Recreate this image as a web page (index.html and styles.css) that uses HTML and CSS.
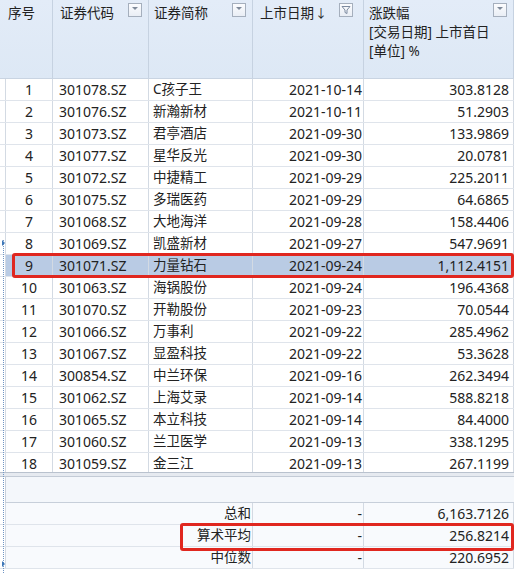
FILE: index.html
```html
<!DOCTYPE html>
<html lang="zh">
<head>
<meta charset="utf-8">
<link rel="stylesheet" href="styles.css">
</head>
<body>
<div class="sheet">
  <div class="head">
    <div class="hc"><span class="zh">序号</span></div>
    <div class="hc"><span class="zh">证券代码</span><i class="dd"></i></div>
    <div class="hc"><span class="zh">证券简称</span><i class="dd"></i></div>
    <div class="hc"><span class="zh">上市日期<b class="arr">↓</b></span><i class="dd flt"><svg width="10" height="10" viewBox="0 0 10 10"><path d="M1 1.5H9L6 5V8.5L4 7.5V5Z" fill="none" stroke="#7d8ba0" stroke-width="1"/></svg></i></div>
    <div class="hc"><span class="zh">涨跌幅<br>[交易日期] 上市首日<br>[单位] %</span><i class="dd"></i></div>
  </div>
  <div class="body">
    <div class="row"><div class="g"></div><div class="c n">1</div><div class="c">301078.SZ</div><div class="c zh">C孩子王</div><div class="c r">2021-10-14</div><div class="c r v">303.8128</div></div>
    <div class="row"><div class="g"></div><div class="c n">2</div><div class="c">301076.SZ</div><div class="c zh">新瀚新材</div><div class="c r">2021-10-11</div><div class="c r v">51.2903</div></div>
    <div class="row"><div class="g"></div><div class="c n">3</div><div class="c">301073.SZ</div><div class="c zh">君亭酒店</div><div class="c r">2021-09-30</div><div class="c r v">133.9869</div></div>
    <div class="row"><div class="g"></div><div class="c n">4</div><div class="c">301077.SZ</div><div class="c zh">星华反光</div><div class="c r">2021-09-30</div><div class="c r v">20.0781</div></div>
    <div class="row"><div class="g"></div><div class="c n">5</div><div class="c">301072.SZ</div><div class="c zh">中捷精工</div><div class="c r">2021-09-29</div><div class="c r v">225.2011</div></div>
    <div class="row"><div class="g"></div><div class="c n">6</div><div class="c">301075.SZ</div><div class="c zh">多瑞医药</div><div class="c r">2021-09-29</div><div class="c r v">64.6865</div></div>
    <div class="row"><div class="g"></div><div class="c n">7</div><div class="c">301068.SZ</div><div class="c zh">大地海洋</div><div class="c r">2021-09-28</div><div class="c r v">158.4406</div></div>
    <div class="row"><div class="g"></div><div class="c n">8</div><div class="c">301069.SZ</div><div class="c zh">凯盛新材</div><div class="c r">2021-09-27</div><div class="c r v">547.9691</div></div>
    <div class="row sel"><div class="g"></div><div class="c n">9</div><div class="c">301071.SZ</div><div class="c zh">力量钻石</div><div class="c r">2021-09-24</div><div class="c r v">1,112.4151</div></div>
    <div class="row"><div class="g"></div><div class="c n">10</div><div class="c">301063.SZ</div><div class="c zh">海锅股份</div><div class="c r">2021-09-24</div><div class="c r v">196.4368</div></div>
    <div class="row"><div class="g"></div><div class="c n">11</div><div class="c">301070.SZ</div><div class="c zh">开勒股份</div><div class="c r">2021-09-23</div><div class="c r v">70.0544</div></div>
    <div class="row"><div class="g"></div><div class="c n">12</div><div class="c">301066.SZ</div><div class="c zh">万事利</div><div class="c r">2021-09-22</div><div class="c r v">285.4962</div></div>
    <div class="row"><div class="g"></div><div class="c n">13</div><div class="c">301067.SZ</div><div class="c zh">显盈科技</div><div class="c r">2021-09-22</div><div class="c r v">53.3628</div></div>
    <div class="row"><div class="g"></div><div class="c n">14</div><div class="c">300854.SZ</div><div class="c zh">中兰环保</div><div class="c r">2021-09-16</div><div class="c r v">262.3494</div></div>
    <div class="row"><div class="g"></div><div class="c n">15</div><div class="c">301062.SZ</div><div class="c zh">上海艾录</div><div class="c r">2021-09-14</div><div class="c r v">588.8218</div></div>
    <div class="row"><div class="g"></div><div class="c n">16</div><div class="c">301065.SZ</div><div class="c zh">本立科技</div><div class="c r">2021-09-14</div><div class="c r v">84.4000</div></div>
    <div class="row"><div class="g"></div><div class="c n">17</div><div class="c">301060.SZ</div><div class="c zh">兰卫医学</div><div class="c r">2021-09-13</div><div class="c r v">338.1295</div></div>
    <div class="row"><div class="g"></div><div class="c n">18</div><div class="c">301059.SZ</div><div class="c zh">金三江</div><div class="c r">2021-09-13</div><div class="c r v">267.1199</div></div>
  </div>
  <div class="split"></div>
  <div class="blank"><div class="g"></div><div class="bx"></div></div>
  <div class="tot"><div class="g"></div><div class="c r lab zh">总和</div><div class="c r">-</div><div class="c r v">6,163.7126</div></div>
  <div class="tot"><div class="g"></div><div class="c r lab zh">算术平均</div><div class="c r">-</div><div class="c r v">256.8214</div></div>
  <div class="tot"><div class="g"></div><div class="c r lab zh">中位数</div><div class="c r">-</div><div class="c r v">220.6952</div></div>
  <div class="dots"></div>
  <div class="mark m1"></div>
  <div class="mark m2"></div>
  <div class="box b1"></div>
  <div class="box b2"></div>
</div>
</body>
</html>
```
FILE: styles.css
```css
html, body {
  margin: 0;
  padding: 0;
  background: #ffffff;
}
body {
  width: 514px;
  height: 573px;
  overflow: hidden;
  font-family: "Noto Sans", "Noto Sans CJK SC", sans-serif;
  font-size: 14px;
  color: #222222;
}
.sheet {
  position: relative;
  width: 514px;
  height: 573px;
  overflow: hidden;
}
.zh { font-size: 13.5px; }
.arr {
  font-weight: normal;
  font-size: 12px;
  margin-left: 1px;
}
.head {
  display: grid;
  grid-template-columns: 53px 96px 104px 111px 150px;
  height: 79px;
  box-sizing: border-box;
  border-bottom: 1px solid #c9d4e2;
  background: linear-gradient(#e3ecf8, #dde8f5);
}
.hc {
  display: flex;
  justify-content: space-between;
  align-items: flex-start;
  border-right: 1px solid #c6d2e1;
  padding: 4px 6px 0 7px;
  line-height: 19px;
  white-space: nowrap;
}
.hc:first-child { padding-left: 8px; }
.hc:nth-child(3), .hc:nth-child(5) { padding-left: 5px; }
.hc:nth-child(4) { padding-right: 10px; }
.dd {
  position: relative;
  flex: none;
  width: 14px;
  height: 14px;
  margin-top: -1px;
  box-sizing: border-box;
  border: 1px solid #a5afbd;
  background: linear-gradient(#fbfcfe, #e9eef5);
  display: flex;
  align-items: center;
  justify-content: center;
}
.dd::after {
  content: "";
  width: 0;
  height: 0;
  border-left: 3px solid transparent;
  border-right: 3px solid transparent;
  border-top: 3px solid #7f8a9a;
  margin-top: -3px;
}
.dd.flt::after { display: none; }
.dd svg { display: block; }
.body {
  height: 393px;
  overflow: hidden;
}
.row, .tot {
  display: grid;
  grid-template-columns: 5px 48px 96px 104px 111px 150px;
  height: 22px;
  box-sizing: border-box;
  border-bottom: 1px solid #dfe4eb;
  line-height: 21px;
  white-space: nowrap;
}
.tot {
  grid-template-columns: 5px 248px 111px 150px;
  background: #f8fafd;
}
.g { background: #ffffff; }
.c {
  border-right: 1px solid #d3dae3;
  padding: 0 6px;
  overflow: hidden;
}
.row .c:nth-child(2) { border-left: 1px solid #d3dae3; }
.tot .c:nth-child(2) { border-left: 1px solid #d3dae3; }
.row .c:nth-child(4) { padding-left: 4px; }
.n { text-align: center; padding: 0; }
.r { text-align: right; padding-right: 1px; }
.v { padding-right: 4px; }
.lab { padding-right: 1px; }
.sel .c { background: #b9cbe4; }
.split {
  height: 5px;
  box-sizing: border-box;
  border-top: 1px solid #b9c2ce;
  border-bottom: 1px solid #c3cbd6;
  background: #e6eaf0;
}
.blank {
  display: flex;
  height: 26px;
}
.blank .g { width: 5px; flex: none; }
.bx {
  flex: 1;
  box-sizing: border-box;
  border-left: 1px solid #c7cfda;
  border-bottom: 1px solid #c7cfda;
  background: #f4f7fb;
}
.dots {
  position: absolute;
  left: 3px;
  top: 240px;
  width: 0;
  height: 333px;
  border-left: 1px dotted #6f95c4;
}
.mark {
  position: absolute;
  left: 2px;
  width: 0;
  height: 0;
  border-top: 3px solid transparent;
  border-bottom: 3px solid transparent;
  border-left: 3px solid #3f78b8;
}
.m1 { top: 240px; }
.m2 { top: 561px; }
.box {
  position: absolute;
  box-sizing: border-box;
  border: 3px solid #e0271f;
  border-radius: 3px;
}
.b1 { left: 12px; top: 253px; width: 502px; height: 25px; }
.b2 { left: 180px; top: 523px; width: 334px; height: 28px; }
```
